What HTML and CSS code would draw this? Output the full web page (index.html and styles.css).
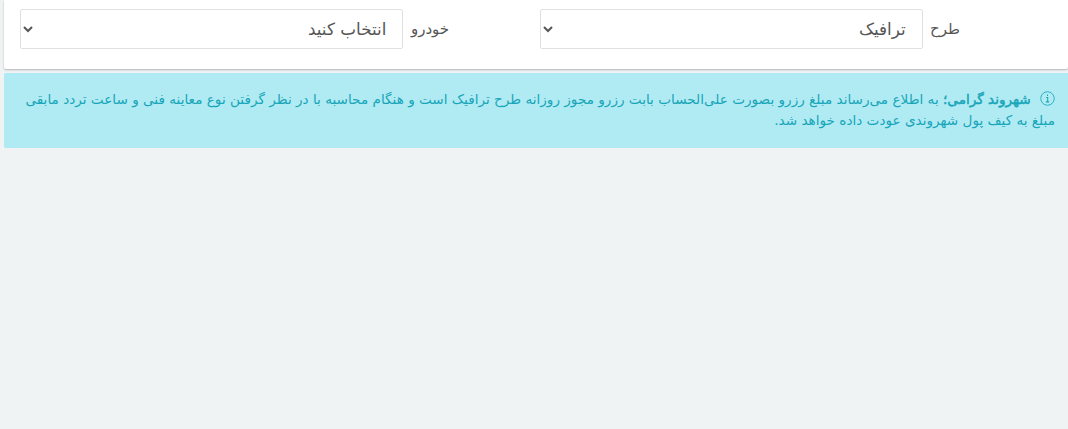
FILE: index.html
```html
<!doctype html>
<html lang="fa" dir="rtl">
<head>
  <meta charset="UTF-8">
  <title>طرح ترافیک</title>
  <link rel="stylesheet" href="styles.css">
</head>
<body>
<div class="page-wrapper">
  <div class="filter-card">
    <div class="field">
      <label class="field-label" for="plan">طرح</label>
      <select class="field-select" id="plan">
        <option>ترافیک</option>
      </select>
    </div>
    <div class="field">
      <label class="field-label" for="car">خودرو</label>
      <select class="field-select" id="car">
        <option>انتخاب کنید</option>
      </select>
    </div>
  </div>
  <div class="alert-info">
    <svg class="alert-icon" viewBox="0 0 16 16" width="15" height="15" aria-hidden="true">
      <circle cx="8" cy="8" r="7.2" fill="none" stroke="currentColor" stroke-width=".9"/>
      <path d="M8 3.6v1.6M6.6 7h1.6v4.4M6.3 11.6h3.4" fill="none" stroke="currentColor" stroke-width="1.1"/>
    </svg>
    <strong class="alert-lead">شهروند گرامی؛</strong> به اطلاع می‌رساند مبلغ رزرو بصورت علی‌الحساب بابت رزرو مجوز روزانه طرح ترافیک است و هنگام محاسبه با در نظر گرفتن نوع معاینه فنی و ساعت تردد مابقی مبلغ به کیف پول شهروندی عودت داده خواهد شد.
  </div>
</div>
</body>
</html>
```

FILE: styles.css
```css
body {
  margin: 0;
  background: #eff3f4;
  font-family: "DejaVu Sans", sans-serif;
  color: #555;
}

.page-wrapper {
  min-height: 429px;
  padding-left: 4px;
}

.filter-card {
  display: flex;
  gap: 90.5px;
  height: 69px;
  box-sizing: border-box;
  padding: 9px 108px 0 0;
  background: #fff;
  border-radius: 0 0 2px 2px;
  box-shadow: 0 1px 2px rgba(0, 0, 0, .25);
}

.field {
  display: flex;
  align-items: flex-start;
  gap: 7.5px;
}

.field-label {
  font-size: 15px;
  line-height: 40px;
}

.field-select {
  width: 383px;
  height: 40px;
  padding: 0 12px;
  font-family: inherit;
  font-size: 16.8px;
  color: #555;
  background: #fff;
  border: 1px solid #e0e0e0;
  border-radius: 2px;
}

.alert-info {
  margin-top: 4px;
  height: 75px;
  box-sizing: border-box;
  padding: 16px 13px 0 10px;
  font-size: 13.6px;
  line-height: 21px;
  color: #17a5b9;
  background: #b0ebf3;
  border-radius: 2px 0 0 2px;
}

.alert-lead {
  font-weight: normal;
  -webkit-text-stroke: .45px currentColor;
}

.alert-icon {
  vertical-align: -2px;
  margin-left: 5px;
}
```
